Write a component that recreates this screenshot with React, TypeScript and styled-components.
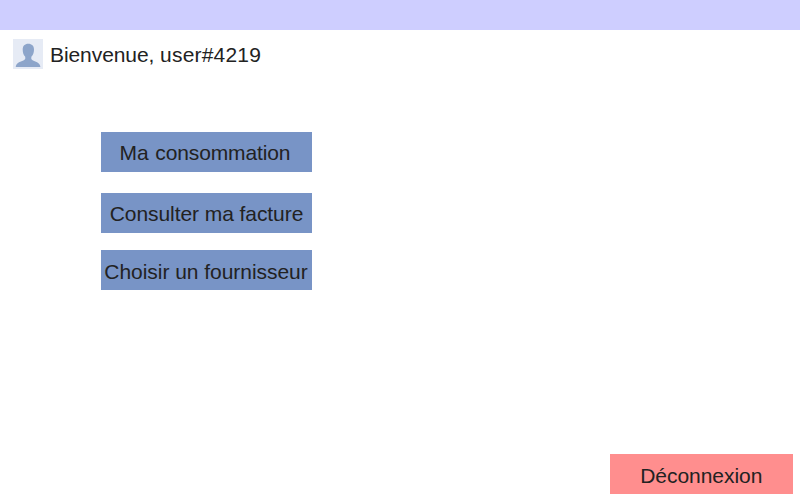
import React from "react";
import styled, { createGlobalStyle } from "styled-components";

const GlobalStyle = createGlobalStyle`
  * { box-sizing: border-box; }
  body { margin: 0; background: #fff; }
`;

const Page = styled.div`
  display: flex;
  flex-direction: column;
  width: 800px;
  height: 500px;
  overflow: hidden;
  background: #fff;
  color: #222;
  font: 21px/24px "Liberation Sans", Arial, sans-serif;
`;

const TopBar = styled.header`
  height: 30px;
  background: #ceceff;
`;

const Welcome = styled.div`
  display: flex;
  align-items: center;
  gap: 7px;
  height: 30px;
  margin: 9px 0 0 13px;
`;

const Avatar = styled.svg`
  display: block;
  width: 30px;
  height: 30px;
`;

const Greeting = styled.span`
  padding-top: 2px;
  letter-spacing: -0.08px;
`;

const UserName = styled.span`
  letter-spacing: 0.2px;
`;

const Menu = styled.nav`
  display: flex;
  flex-direction: column;
  width: 211px;
  margin: 63px 0 0 101px;
`;

interface ButtonProps {
  $danger?: boolean;
  $gap?: number;
  $pad?: string;
  $tracking?: number;
  $wordGap?: number;
}

const Button = styled.button<ButtonProps>`
  flex: none;
  display: flex;
  align-items: center;
  justify-content: center;
  width: ${(p) => (p.$danger ? 183 : 211)}px;
  height: 40px;
  margin: ${(p) => p.$gap ?? 0}px 0 0;
  padding: ${(p) => p.$pad ?? "3px 0 0"};
  border: 0;
  background: ${(p) => (p.$danger ? "#ff8e8e" : "#7894c6")};
  color: inherit;
  font: inherit;
  letter-spacing: ${(p) => p.$tracking ?? 0}px;
  word-spacing: ${(p) => p.$wordGap ?? 0}px;
  white-space: nowrap;
`;

const Footer = styled.footer`
  display: flex;
  justify-content: flex-end;
  margin-top: auto;
  padding: 0 7px 6px 0;
`;

export default function App() {
  return (
    <Page>
      <GlobalStyle />
      <TopBar />
      <Welcome>
        <Avatar viewBox="0 0 30 30" aria-hidden="true">
          <rect width="30" height="30" fill="#e6ebf5" />
          <path
            d="M15.3 4.8C11.8 4.8 9.7 7 9.7 10.4C9.7 13.2 10.4 15.7 12.1 17.5C12.7 19.8 12.2 20.7 10.4 21.4L6 23.2C3.9 24.3 3 25.8 2.7 28H27.4C27.1 25.8 26.2 24.3 24.1 23.2L20 21.4C18.3 20.7 17.9 19.8 18.5 17.5C20.2 15.7 21 13.2 21 10.4C21 7 18.8 4.8 15.3 4.8Z"
            fill="#8da5ca"
          />
        </Avatar>
        <Greeting>
          Bienvenue, <UserName>user#4219</UserName>
        </Greeting>
      </Welcome>
      <Menu>
        <Button $pad="1px 3px 0 0" $tracking={-0.12} $wordGap={1}>Ma consommation</Button>
        <Button $gap={21} $pad="1px 0 0" $tracking={-0.07}>Consulter ma facture</Button>
        <Button $gap={17} $pad="3px 1px 0 0" $tracking={-0.04}>Choisir un fournisseur</Button>
      </Menu>
      <Footer>
        <Button $danger $pad="3px 0.5px 0 0" $tracking={-0.04}>Déconnexion</Button>
      </Footer>
    </Page>
  );
}
